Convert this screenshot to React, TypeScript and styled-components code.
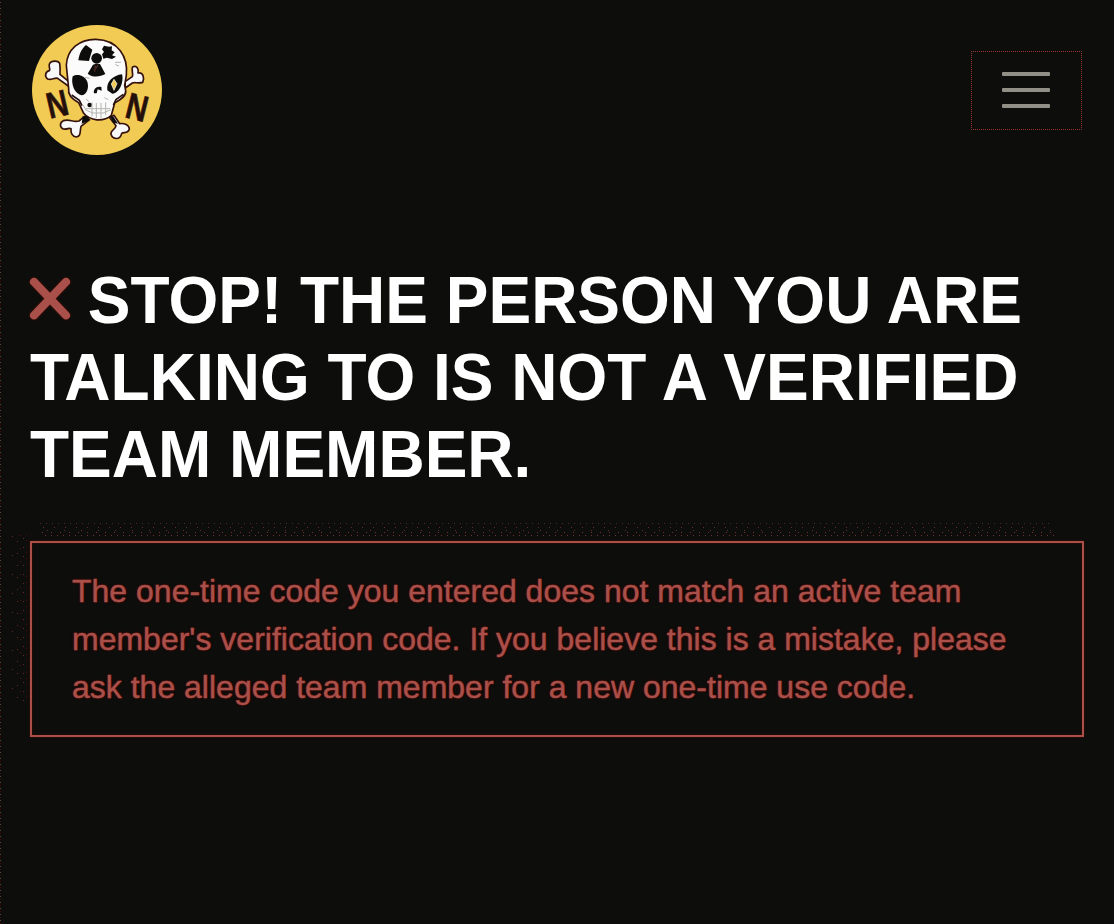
import React from "react";
import styled, { createGlobalStyle } from "styled-components";

const GlobalStyle = createGlobalStyle`
  * { box-sizing: border-box; }
  html, body { margin: 0; background: #fff; }
  body { font-family: "Liberation Sans", Arial, sans-serif; overflow: hidden; }
`;

const dot = (color: string) =>
  `conic-gradient(from 270deg at 1px 1px, ${color} 90deg, transparent 0)`;

const Page = styled.div`
  width: 1114px;
  height: 924px;
  background: ${dot("#5f4540")} 0 2px / 1200px 6px repeat-y,
    ${dot("#4a0505")} 0 5px / 1200px 6px repeat-y, #0d0e0b;
`;

const Navbar = styled.header`
  height: 180px;
  padding: 0 32px;
  display: flex;
  align-items: center;
  justify-content: space-between;
`;

const Logo = styled.svg`
  display: block;
  width: 130px;
  height: 130px;
`;

const MenuButton = styled.button`
  width: 111px;
  height: 79px;
  padding: 0 1px 0 0;
  background: transparent;
  border: 1px dotted #98352f;
  display: flex;
  flex-direction: column;
  align-items: center;
  justify-content: center;
  gap: 12px;
`;

const Bar = styled.span`
  width: 48px;
  height: 4px;
  border-radius: 1px;
  background: #918f86;
`;

const Main = styled.main`
  padding: 81px 30px 0;
`;

const Title = styled.h1`
  margin: 0;
  height: 232px;
  color: #fff;
  font-size: 64px;
  font-weight: 700;
  line-height: 74px;
  white-space: nowrap;
  transform: scaleY(1.045);
  transform-origin: 0 0;
`;

const Cross = styled.svg`
  width: 40px;
  height: 40px;
  overflow: visible;
  vertical-align: 3px;
  filter: drop-shadow(0 0 1px #5a0d09);
`;

const Alert = styled.p`
  position: relative;
  margin: 48px 0 0;
  height: 196px;
  border: 2px solid #ab4f49;
  box-shadow: 0 0 2px #4a0704, inset 0 0 2px #4a0704;
  padding: 24px 40px;
  font-size: 32px;
  line-height: 48px;
  color: #a9504a;
  -webkit-text-stroke: 0.4px #a9504a;
  text-shadow: 0 0 2px #5a0805, 0 0 2px #5a0805;
  white-space: nowrap;

  &::before {
    content: "";
    position: absolute;
    left: 8px;
    right: 28px;
    top: -21px;
    height: 17px;
    background: ${dot("#4d2723")} 0 1px / 6px 40px repeat-x,
      ${dot("#5e2f2b")} 3px 5px / 11px 40px repeat-x,
      ${dot("#5e2f2b")} 7px 8px / 17px 40px repeat-x,
      ${dot("#6d342f")} 2px 10px / 9px 40px repeat-x,
      ${dot("#6d342f")} 5px 13px / 6px 40px repeat-x;
  }

  &::after {
    content: "";
    position: absolute;
    left: -22px;
    top: -10px;
    width: 18px;
    height: 168px;
    background: ${dot("#592a26")} 2px 3px / 40px 19px repeat-y,
      ${dot("#592a26")} 7px 8px / 40px 12px repeat-y,
      ${dot("#4c1512")} 10px 2px / 40px 13px repeat-y,
      ${dot("#632a26")} 13px 5px / 40px 9px repeat-y,
      ${dot("#4c0a08")} 16px 1px / 40px 6px repeat-y;
  }
`;

const SkullLogo = () => (
  <Logo viewBox="36 30 390 390" role="img" aria-label="NN">
    <circle cx="231" cy="225" r="195" fill="#f2cb54" />
    <g fill="#f8f8f8" stroke="#35120c" strokeWidth="5" strokeLinejoin="round">
      <path d="M150 203L120 178C121 163 120 151 119 145C116 137 95 135 89 145C84 153 91 160 89 166C74 170 74 186 83 192C94 197 103 187 113 190L149 216Z" />
      <path d="M315 200L337 185C341 175 332 160 339 155C350 151 357 161 354 174C369 171 374 187 368 202C354 206 344 201 337 204L316 219Z" />
      <path d="M194 304L177 318C158 323 150 311 130 317C118 323 119 337 130 342C142 344 148 337 153 341C152 353 156 365 169 366C184 364 179 350 183 334L207 315Z" />
      <path d="M269 308L288 332C286 347 271 343 273 358C278 374 301 376 305 355C312 350 324 357 328 342C327 329 313 324 299 326L282 301Z" />
    </g>
    <path
      d="M228 73C178 72 141 103 139 151L146 221C143 239 155 252 176 263L191 295C210 318 250 322 274 301L284 264C306 252 319 242 317 227L314 211L319 181C325 126 295 75 228 73Z"
      fill="#fbfbfb" stroke="#35120c" strokeWidth="5"
    />
    <g fill="#0d0e0b">
      <circle cx="230" cy="130" r="16" />
      <path d="M175 136C178 117 184 102 198 90L217 104L211 124L207 138Z" />
      <path d="M252 92L267 95L276 94L275 106L284 112L276 121L288 125L276 132L261 128L250 131L246 118L252 111L246 103Z" />
      <path d="M219 149L228 146L240 147L256 177C240 186 218 188 203 176Z" />
      <path d="M158 184C172 175 194 181 202 200C208 219 200 239 184 241C164 237 152 207 158 184Z" />
      <path d="M262 226C258 199 280 181 306 178C312 198 300 235 277 236Z" />
      <path d="M222 235C219 222 230 212 244 216L245 227L233 223L230 235Z" />
      <circle cx="209" cy="270" r="7" />
      <path d="M188 304L200 303L212 315L185 326Z M270 303L281 306L294 326L279 323Z" />
    </g>
    <path d="M282 193L291 206L282 226L274 207Z" fill="#f2cb54" stroke="#fff" strokeWidth="2" />
    <path d="M226 152L224 170M234 149L229 160" stroke="#6e302a" strokeWidth="3" />
    <path
      d="M155 240L178 256L186 272M310 238L288 254L280 270"
      fill="none" stroke="#24100c" strokeWidth="5"
    />
    <path
      d="M189 270L198 285L218 294L249 294L273 284M198 281H270M216 262V304M229 264V309M243 264V309M257 262V301M198 252L207 260M253 248L265 254M285 142H303M286 149L297 153M194 187L209 190"
      fill="none" stroke="#b4b3af" strokeWidth="3"
    />
    <g
      fill="#21110c" stroke="#421009" strokeWidth="2"
      fontFamily="Liberation Sans" fontWeight="700" fontSize="110" textAnchor="middle"
    >
      <text transform="translate(120 304) rotate(-13) scale(.8 1)">N</text>
      <text transform="translate(342 314) rotate(14) scale(.8 1)">N</text>
    </g>
  </Logo>
);

export default function App() {
  return (
    <Page>
      <GlobalStyle />
      <Navbar>
        <SkullLogo />
        <MenuButton aria-label="Menu">
          <Bar />
          <Bar />
          <Bar />
        </MenuButton>
      </Navbar>
      <Main>
        <Title>
          <Cross viewBox="0 0 40 40">
            <path d="M4 4L36 36M36 4L4 36" stroke="#a9504a" strokeWidth="8" strokeLinecap="round" />
          </Cross>{" "}
          STOP! THE PERSON YOU ARE
          <br />
          TALKING TO IS NOT A VERIFIED
          <br />
          TEAM MEMBER.
        </Title>
        <Alert>
          The one-time code you entered does not match an active team
          <br />
          member's verification code. If you believe this is a mistake, please
          <br />
          ask the alleged team member for a new one-time use code.
        </Alert>
      </Main>
    </Page>
  );
}
